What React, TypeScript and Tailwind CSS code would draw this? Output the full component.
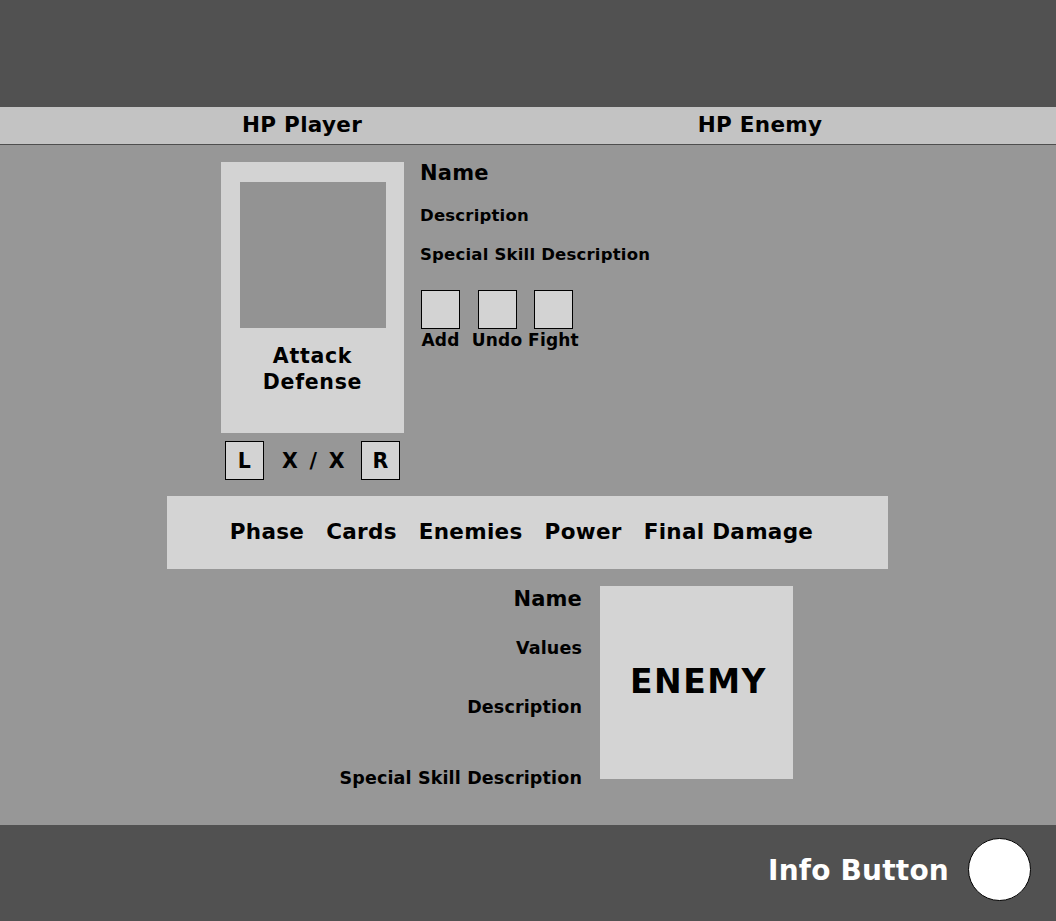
import React from 'react';

const ACTIONS = ['Add', 'Undo', 'Fight'];
const TABS = ['Phase', 'Cards', 'Enemies', 'Power', 'Final Damage'];

const SmallBox: React.FC<{ label?: string }> = ({ label }) => (
  <div className="w-[39px] h-[39px] border border-black bg-[#d3d3d3] flex items-center justify-center pt-[1px] text-[20.5px] leading-none">
    {label}
  </div>
);

const PlayerCard: React.FC = () => (
  <div className="flex flex-col w-[183px]">
    <div className="h-[271px] bg-[#d3d3d3] flex flex-col items-center pt-[20px]">
      <div className="w-[146px] h-[146px] bg-[#939393]" />
      <div className="mt-[15px] text-[20.5px] leading-[26px] tracking-[0.7px] text-center">
        Attack
        <br />
        Defense
      </div>
    </div>
    <div className="mt-[8px] px-[4px] flex items-center justify-between">
      <SmallBox label="L" />
      <span className="pt-[1px] pl-[2px] text-[20.5px] leading-none [word-spacing:4px]">X / X</span>
      <SmallBox label="R" />
    </div>
  </div>
);

const PlayerInfo: React.FC = () => (
  <div className="flex flex-col pt-[1px] tracking-[0.2px]">
    <div className="text-[21px] leading-[20px]">Name</div>
    <div className="mt-[23px] text-[16.5px] leading-[20px]">Description</div>
    <div className="mt-[19px] text-[16.5px] leading-[20px]">Special Skill Description</div>
    <div className="-mt-[1px] pt-[26px] pl-[1px] flex gap-[17.5px]">
      {ACTIONS.map((a) => (
        <div key={a} className="w-[39px] flex flex-col items-center">
          <SmallBox />
          <span className="mt-[1px] text-[17px] leading-[20px] whitespace-nowrap">{a}</span>
        </div>
      ))}
    </div>
  </div>
);

const EnemyPanel: React.FC = () => (
  <div className="mt-[17px] flex">
    <div className="w-[415px] pt-[1px] flex flex-col items-end tracking-[0.15px]">
      <div className="text-[21px] leading-[24px]">Name</div>
      <div className="mt-[27px] text-[17.5px] leading-[20px]">Values</div>
      <div className="mt-[39px] text-[17.5px] leading-[20px]">Description</div>
      <div className="mt-[51px] text-[17.5px] leading-[20px] whitespace-nowrap">Special Skill Description</div>
    </div>
    <div className="ml-[18px] w-[193px] h-[193px] bg-[#d4d4d4] flex items-center justify-center">
      <span className="ml-[4px] -mt-[3px] text-[33px] leading-none tracking-[1.5px]">ENEMY</span>
    </div>
  </div>
);

export default function App() {
  return (
    <div
      className="w-[1056px] h-[921px] flex flex-col font-bold text-black tracking-[0.3px]"
      style={{ fontFamily: '"DejaVu Sans", Verdana, sans-serif' }}
    >
      <div className="h-[107px] bg-[#515151]" />
      <div className="h-[38px] bg-[#c3c3c3] border-b border-[#4e4e4e] grid grid-cols-[604px_312px] items-center text-[21.5px]">
        <span className="text-center">HP Player</span>
        <span className="text-center">HP Enemy</span>
      </div>
      <div className="flex-1 bg-[#979797] flex flex-col items-start pl-[167px] pt-[17px]">
        <div className="w-[721px] flex flex-col">
          <div className="pl-[54px] flex gap-[16px]">
            <PlayerCard />
            <PlayerInfo />
          </div>
          <div className="mt-[16px] h-[73px] bg-[#d4d4d4] flex items-center justify-center gap-[22px] pr-[12px] text-[21.5px]">
            {TABS.map((t) => (
              <span key={t}>{t}</span>
            ))}
          </div>
          <EnemyPanel />
        </div>
      </div>
      <div className="h-[96px] bg-[#515151] flex items-start justify-end pt-[13px] pr-[25px] gap-[19px]">
        <div className="h-[63px] flex items-center pt-[2px] text-white text-[28px] tracking-[0.2px]">Info Button</div>
        <div className="w-[63px] h-[63px] rounded-full bg-white border border-black" />
      </div>
    </div>
  );
}
